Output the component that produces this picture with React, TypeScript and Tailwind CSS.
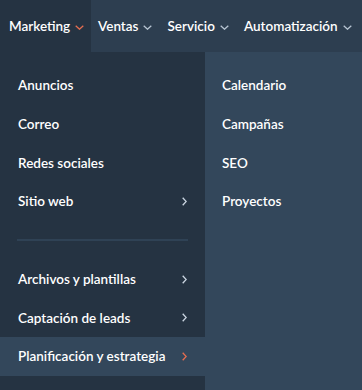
const topNav = [
  { label: 'Marketing', active: true },
  { label: 'Ventas' },
  { label: 'Servicio' },
  { label: 'Automatización' },
]

const leftTop = [
  { label: 'Anuncios' },
  { label: 'Correo' },
  { label: 'Redes sociales' },
  { label: 'Sitio web', sub: true },
]

const leftBottom = [
  { label: 'Archivos y plantillas', sub: true },
  { label: 'Captación de leads', sub: true },
  { label: 'Planificación y estrategia', sub: true, active: true },
]

const rightItems = ['Calendario', 'Campañas', 'SEO', 'Proyectos']

function Down({ active }: { active?: boolean }) {
  return (
    <svg width="9" height="5" viewBox="0 0 9 5" className="ml-[5px] mt-[2px] shrink-0">
      <path
        d="M0.7 0.7 L4.5 4.2 L8.3 0.7"
        fill="none"
        stroke={active ? '#e66e50' : '#b8c5d3'}
        strokeWidth="1.3"
      />
    </svg>
  )
}

function Right({ active }: { active?: boolean }) {
  return (
    <svg width="5" height="9" viewBox="0 0 5 9">
      <path
        d="M0.7 0.7 L4.2 4.5 L0.7 8.3"
        fill="none"
        stroke={active ? '#e66e50' : '#cbd6e2'}
        strokeWidth="1.3"
      />
    </svg>
  )
}

function Row({ label, sub, active }: { label: string; sub?: boolean; active?: boolean }) {
  return (
    <div
      className={`flex h-[38.7px] items-center justify-between pl-[18px] pr-[18px] ${
        active ? 'bg-[#33475b]' : ''
      }`}
    >
      <span>{label}</span>
      {sub && <Right active={active} />}
    </div>
  )
}

export default function App() {
  return (
    <div
      className="flex h-[390px] w-[362px] flex-col overflow-hidden bg-[#33475b] text-[13.5px] font-semibold text-white"
      style={{ fontFamily: 'Lato, "Open Sans", sans-serif' }}
    >
      <nav className="flex h-[52px] shrink-0 items-stretch whitespace-nowrap bg-[#2d3e50]">
        {topNav.map((item) => (
          <div
            key={item.label}
            className={`flex items-center ${
              item.active ? 'w-[91px] shrink-0 bg-[#253342] pl-[9px]' : 'pl-[7px] pr-[8px]'
            }`}
          >
            <span>{item.label}</span>
            <Down active={item.active} />
          </div>
        ))}
      </nav>
      <div className="flex flex-1">
        <div className="flex w-[205px] flex-col bg-[#253342] pt-[14px]">
          {leftTop.map((r) => (
            <Row key={r.label} {...r} />
          ))}
          <div className="mx-[17px] mb-[19px] mt-[18px] h-[2px] bg-[#2f4255]" />
          {leftBottom.map((r) => (
            <Row key={r.label} {...r} />
          ))}
        </div>
        <div className="flex flex-1 flex-col pt-[14px]">
          {rightItems.map((r) => (
            <div key={r} className="flex h-[38.7px] items-center pl-[17px]">
              {r}
            </div>
          ))}
        </div>
      </div>
    </div>
  )
}
